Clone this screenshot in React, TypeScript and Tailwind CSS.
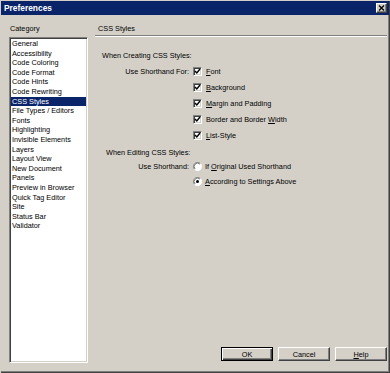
import React from 'react';

const CATEGORIES = [
  'General',
  'Accessibility',
  'Code Coloring',
  'Code Format',
  'Code Hints',
  'Code Rewriting',
  'CSS Styles',
  'File Types / Editors',
  'Fonts',
  'Highlighting',
  'Invisible Elements',
  'Layers',
  'Layout View',
  'New Document',
  'Panels',
  'Preview in Browser',
  'Quick Tag Editor',
  'Site',
  'Status Bar',
  'Validator',
];

// mnemonic letter, underlined like a win32 label
const U: React.FC<{ children: React.ReactNode }> = ({ children }) => (
  <span className="underline decoration-[0.6px] underline-offset-[1px]">{children}</span>
);

const Checkbox: React.FC = () => (
  <span className="w-[9px] h-[9px] bg-white border border-t-[#808080] border-l-[#808080] border-r-white border-b-white shadow-[inset_1px_1px_0_#404040,inset_-1px_-1px_0_#d4d0c8] flex items-center justify-center shrink-0">
    <svg width="7" height="7" viewBox="0 0 7 7">
      <path d="M1 3 L2.8 5 L6 1" stroke="#000" strokeWidth="1.4" fill="none" />
    </svg>
  </span>
);

const Radio: React.FC<{ checked?: boolean }> = ({ checked }) => (
  <svg width="9" height="9" viewBox="0 0 12 12" className="shrink-0">
    <circle cx="6" cy="6" r="5.5" fill="#fff" />
    <path d="M10 2 A5.5 5.5 0 0 0 2 10" stroke="#808080" strokeWidth="1" fill="none" />
    <path d="M9.2 2.8 A4.5 4.5 0 0 0 2.8 9.2" stroke="#404040" strokeWidth="1" fill="none" />
    <path d="M2 10 A5.5 5.5 0 0 0 10 2" stroke="#ffffff" strokeWidth="1" fill="none" />
    {checked && <circle cx="6" cy="6" r="2" fill="#000" />}
  </svg>
);

const buttonBase =
  'w-[52px] h-[14px] flex items-center justify-center text-black bg-[#d4d0c8]';

const App: React.FC = () => {
  const selected = 'CSS Styles';

  return (
    <div className="w-[390px] h-[373px] bg-[#d4d0c8] flex flex-col font-['Liberation_Sans',Arial,sans-serif] text-[7.3px] leading-[9px] text-[#000] overflow-hidden opacity-[0.999] shadow-[inset_1px_1px_0_#d4d0c8,inset_-1px_-1px_0_#404040,inset_-2px_-2px_0_#808080]">
      {/* title bar */}
      <div className="mt-[1px] mx-[1px] h-[14px] bg-[#0a246a] flex items-center justify-between pl-[3px] pr-[2px] shrink-0">
        <span className="text-white font-bold text-[8.4px]">Preferences</span>
        <span className="w-[11px] h-[10px] bg-[#d4d0c8] border border-t-white border-l-white border-r-[#404040] border-b-[#404040] shadow-[inset_-1px_-1px_0_#808080] flex items-center justify-center">
          <svg width="7" height="6" viewBox="0 0 7 6">
            <path d="M1 0.5 L6 5.5 M6 0.5 L1 5.5" stroke="#000" strokeWidth="1.3" />
          </svg>
        </span>
      </div>

      <div className="flex flex-1 pt-[9px] pb-[8px] pl-[9px] pr-[3px]">
        {/* category list */}
        <div className="w-[79px] flex flex-col shrink-0">
          <div className="h-[9px] pl-[1px]">Category</div>
          <div className="mt-[4px] h-[326px] bg-white border border-t-[#808080] border-l-[#808080] border-r-white border-b-white shadow-[inset_1px_1px_0_#404040,inset_-1px_-1px_0_#d4d0c8] pt-[1px] px-[1px]">
            {CATEGORIES.map((c) => (
              <div
                key={c}
                className={`h-[9.6px] leading-[9.6px] pl-[1px] whitespace-nowrap ${
                  c === selected ? 'bg-[#0a246a] text-white' : ''
                }`}
              >
                {c}
              </div>
            ))}
          </div>
        </div>

        {/* settings panel */}
        <div className="flex-1 ml-[7px] flex flex-col">
          <div className="h-[9px] pl-[3px]">CSS Styles</div>
          <div className="mt-[2px] h-[2px] border-t border-t-[#808080] border-b border-b-white" />

          <div className="mt-[13px] h-[10px] flex items-center pl-[7px]">When Creating CSS Styles:</div>

          <div className="mt-[4px] flex flex-col">
            {[
              <><U>F</U>ont</>,
              <><U>B</U>ackground</>,
              <><U>M</U>argin and Padding</>,
              <>Border and Border <U>W</U>idth</>,
              <><U>L</U>ist-Style</>,
            ].map((label, i) => (
              <div key={i} className="h-[15.9px] flex items-center">
                <span className="w-[95px] text-right pr-[1px]">{i === 0 ? 'Use Shorthand For:' : ''}</span>
                <span className="ml-[3px]">
                  <Checkbox />
                </span>
                <span className="ml-[4px] whitespace-nowrap">{label}</span>
              </div>
            ))}
          </div>

          <div className="mt-[4px] h-[10px] flex items-center pl-[11px]">When Editing CSS Styles:</div>

          <div className="mt-[2px] flex flex-col">
            <div className="h-[15px] flex items-center">
              <span className="w-[95px] text-right pr-[1px]">Use Shorthand:</span>
              <span className="ml-[3px]">
                <Radio />
              </span>
              <span className="ml-[3px] whitespace-nowrap">
                If <U>O</U>riginal Used Shorthand
              </span>
            </div>
            <div className="h-[15px] flex items-center">
              <span className="w-[95px]" />
              <span className="ml-[3px]">
                <Radio checked />
              </span>
              <span className="ml-[3px] whitespace-nowrap">
                <U>A</U>ccording to Settings Above
              </span>
            </div>
          </div>

          <div className="mt-auto mb-[4px] flex justify-end gap-[5px]">
            <button className={`${buttonBase} border border-black shadow-[inset_1px_1px_0_#fff,inset_-1px_-1px_0_#404040,inset_-2px_-2px_0_#808080]`}>
              OK
            </button>
            <button className={`${buttonBase} border border-t-white border-l-white border-r-[#404040] border-b-[#404040] shadow-[inset_-1px_-1px_0_#808080]`}>
              Cancel
            </button>
            <button className={`${buttonBase} border border-t-white border-l-white border-r-[#404040] border-b-[#404040] shadow-[inset_-1px_-1px_0_#808080]`}>
              <span>
                <U>H</U>elp
              </span>
            </button>
          </div>
        </div>
      </div>
    </div>
  );
};

export default App;
